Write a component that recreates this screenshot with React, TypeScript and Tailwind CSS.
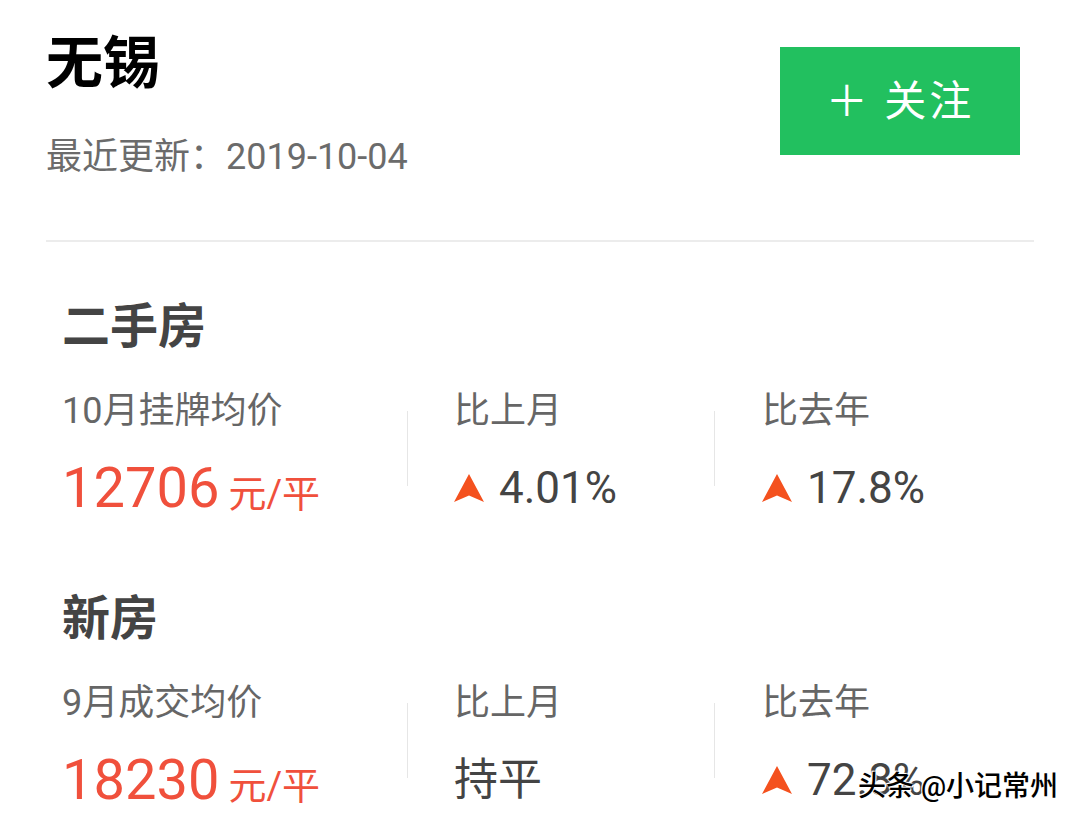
import React from "react";

const FONT = { fontFamily: 'Roboto, "Noto Sans CJK SC", sans-serif' };

// ── Up arrow ──────────────────────────────────────────────────
function UpArrow() {
  return (
    <svg width="30" height="28" viewBox="0 0 30 28" className="shrink-0">
      <polygon points="15,0 30,28 15,21.5 0,28" fill="#f4511e" />
    </svg>
  );
}

function VDivider() {
  return <div className="w-px h-[75px] bg-[#e6e6e6] mt-[20px] shrink-0" />;
}

interface Stat {
  pct?: string;
  flat?: boolean;
}

function Change({ label, stat }: { label: string; stat: Stat }) {
  return (
    <div>
      <div className="text-[36px] leading-[40px] text-[#666]">{label}</div>
      <div className="mt-[32px] h-[50px] flex items-center text-[#444]">
        {stat.flat ? (
          <span className="text-[44px] leading-[50px]">持平</span>
        ) : (
          <>
            <UpArrow />
            <span className="ml-[15px] text-[44px] leading-[50px]">{stat.pct}</span>
          </>
        )}
      </div>
    </div>
  );
}

interface SectionProps {
  title: string;
  label: string;
  price: string;
  mom: Stat;
  yoy: Stat;
}
function Section({ title, label, price, mom, yoy }: SectionProps) {
  return (
    <section className="pl-[62px]">
      <h2 className="text-[48px] leading-[56px] font-bold text-[#444]">{title}</h2>
      <div className="mt-[36px] flex">
        <div className="w-[345px] shrink-0">
          <div className="text-[36px] leading-[40px] text-[#666]">{label}</div>
          <div className="mt-[28px] flex items-baseline text-[#f0503c]">
            <span className="text-[56px] leading-[58px]">{price}</span>
            <span className="ml-[9px] text-[38px]">元/平</span>
          </div>
        </div>
        <VDivider />
        <div className="w-[306px] pl-[46px] shrink-0">
          <Change label="比上月" stat={mom} />
        </div>
        <VDivider />
        <div className="pl-[47px]">
          <Change label="比去年" stat={yoy} />
        </div>
      </div>
    </section>
  );
}

export default function App() {
  return (
    <div className="relative w-[1080px] h-[838px] bg-white overflow-hidden" style={FONT}>
      <header className="px-[46px] pt-[32px] flex justify-between items-start">
        <div>
          <h1 className="text-[57px] leading-[64px] font-bold text-black">无锡</h1>
          <div className="mt-[41px] text-[36px] leading-[40px] text-[#6b6b6b]">最近更新：2019-10-04</div>
        </div>
        <button className="mt-[15px] mr-[14px] w-[240px] h-[108px] bg-[#22c05f] text-white text-[42px] tracking-[3px] flex items-center justify-center">
          ＋ 关注
        </button>
      </header>
      <div className="mx-[46px] mt-[63px] h-[2px] bg-[#ececec]" />

      <div className="mt-[57px]">
        <Section
          title="二手房"
          label="10月挂牌均价"
          price="12706"
          mom={{ pct: "4.01%" }}
          yoy={{ pct: "17.8%" }}
        />
      </div>
      <div className="mt-[68px]">
        <Section
          title="新房"
          label="9月成交均价"
          price="18230"
          mom={{ flat: true }}
          yoy={{ pct: "72.8%" }}
        />
      </div>

      {/* watermark */}
      <div
        className="absolute left-[858px] top-[767px] whitespace-nowrap text-[28px] leading-[40px] font-medium text-black"
        style={{ textShadow: "0 0 2px #fff, 0 0 2px #fff, 1px 1px 0 #fff, -1px -1px 0 #fff" }}
      >
        头条 @小记常州
      </div>
    </div>
  );
}
